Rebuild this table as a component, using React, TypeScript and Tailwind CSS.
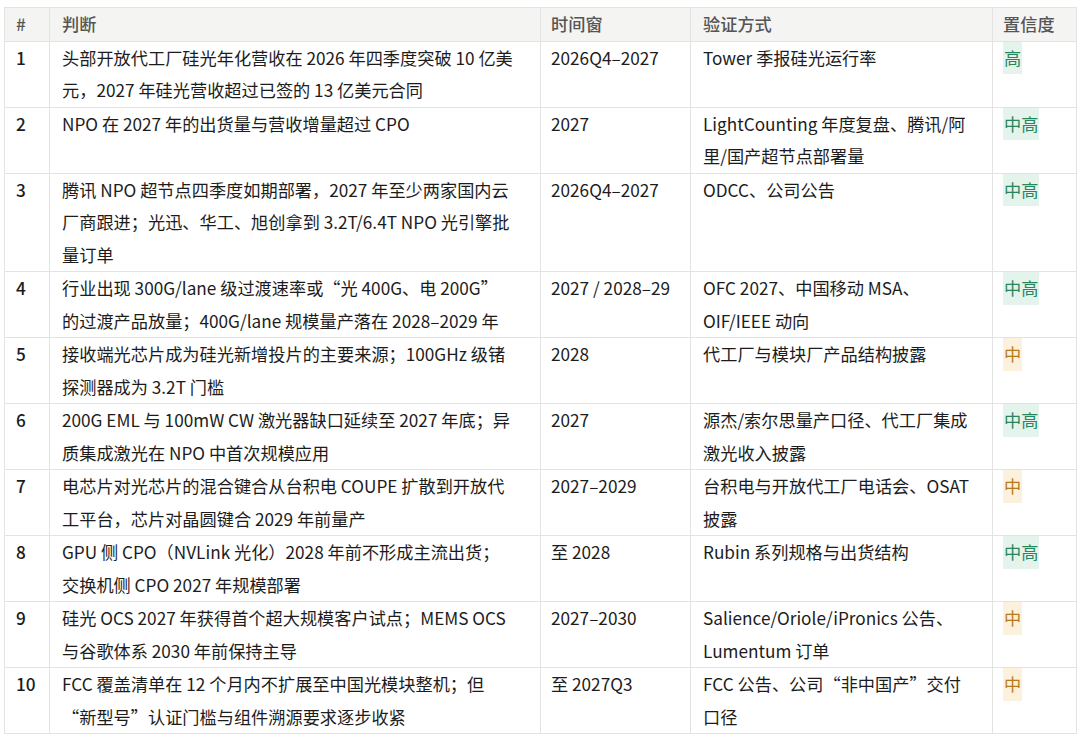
const rows = [
  {
    id: "1",
    claim: ["头部开放代工厂硅光年化营收在 2026 年四季度突破 10 亿美", "元，2027 年硅光营收超过已签的 13 亿美元合同"],
    time: "2026Q4–2027",
    check: ["Tower 季报硅光运行率"],
    level: "高",
  },
  {
    id: "2",
    claim: ["NPO 在 2027 年的出货量与营收增量超过 CPO"],
    time: "2027",
    check: ["LightCounting 年度复盘、腾讯/阿", "里/国产超节点部署量"],
    level: "中高",
  },
  {
    id: "3",
    claim: [
      "腾讯 NPO 超节点四季度如期部署，2027 年至少两家国内云",
      "厂商跟进；光迅、华工、旭创拿到 3.2T/6.4T NPO 光引擎批",
      "量订单",
    ],
    time: "2026Q4–2027",
    check: ["ODCC、公司公告"],
    level: "中高",
  },
  {
    id: "4",
    claim: ["行业出现 300G/lane 级过渡速率或“光 400G、电 200G”", "的过渡产品放量；400G/lane 规模量产落在 2028–2029 年"],
    time: "2027 / 2028–29",
    check: ["OFC 2027、中国移动 MSA、", "OIF/IEEE 动向"],
    level: "中高",
  },
  {
    id: "5",
    claim: ["接收端光芯片成为硅光新增投片的主要来源；100GHz 级锗", "探测器成为 3.2T 门槛"],
    time: "2028",
    check: ["代工厂与模块厂产品结构披露"],
    level: "中",
  },
  {
    id: "6",
    claim: ["200G EML 与 100mW CW 激光器缺口延续至 2027 年底；异", "质集成激光在 NPO 中首次规模应用"],
    time: "2027",
    check: ["源杰/索尔思量产口径、代工厂集成", "激光收入披露"],
    level: "中高",
  },
  {
    id: "7",
    claim: ["电芯片对光芯片的混合键合从台积电 COUPE 扩散到开放代", "工平台，芯片对晶圆键合 2029 年前量产"],
    time: "2027–2029",
    check: ["台积电与开放代工厂电话会、OSAT", "披露"],
    level: "中",
  },
  {
    id: "8",
    claim: ["GPU 侧 CPO（NVLink 光化）2028 年前不形成主流出货；", "交换机侧 CPO 2027 年规模部署"],
    time: "至 2028",
    check: ["Rubin 系列规格与出货结构"],
    level: "中高",
  },
  {
    id: "9",
    claim: ["硅光 OCS 2027 年获得首个超大规模客户试点；MEMS OCS", "与谷歌体系 2030 年前保持主导"],
    time: "2027–2030",
    check: ["Salience/Oriole/iPronics 公告、", "Lumentum 订单"],
    level: "中",
  },
  {
    id: "10",
    claim: ["FCC 覆盖清单在 12 个月内不扩展至中国光模块整机；但", "“新型号”认证门槛与组件溯源要求逐步收紧"],
    time: "至 2027Q3",
    check: ["FCC 公告、公司“非中国产”交付", "口径"],
    level: "中",
  },
]

const Level = ({ level }: { level: string }) => {
  if (level === "中") {
    return <span className="inline-block px-[1px] bg-[#fcf1dc] text-[#b77b1c]">{level}</span>
  }
  return <span className="inline-block px-[1px] bg-[#e4f3ec] text-[#25875b]">{level}</span>
}

const Lines = ({ lines }: { lines: string[] }) => (
  <>
    {lines.map((l, i) => (
      <div key={i} className="whitespace-nowrap">
        {l}
      </div>
    ))}
  </>
)

const App = () => {
  return (
    <div
      className="min-h-[739px] bg-white pt-[7px] pl-[4px]"
      style={{ fontFamily: '"Noto Sans CJK SC", "Noto Sans", sans-serif' }}
    >
      <table className="w-[1072px] table-fixed border-collapse text-[17.2px] leading-[32.5px] text-[#1c1c1c]">
        <colgroup>
          <col className="w-[45px]" />
          <col className="w-[491px]" />
          <col className="w-[150px]" />
          <col className="w-[302px]" />
          <col className="w-[84px]" />
        </colgroup>
        <thead>
          <tr className="bg-[#f4f4f3] text-[#555]">
            <th className="border border-[#e3e3e3] px-[11px] text-left font-medium">#</th>
            <th className="border border-[#e3e3e3] px-[12px] text-left font-medium">判断</th>
            <th className="border border-[#e3e3e3] px-[10px] text-left font-medium">时间窗</th>
            <th className="border border-[#e3e3e3] px-[12px] text-left font-medium">验证方式</th>
            <th className="border border-[#e3e3e3] px-[10px] text-left font-medium">置信度</th>
          </tr>
        </thead>
        <tbody>
          {rows.map((r) => (
            <tr key={r.id}>
              <td className="border border-[#e3e3e3] px-[11px] align-top font-medium">{r.id}</td>
              <td className="border border-[#e3e3e3] px-[12px] align-top">
                <Lines lines={r.claim} />
              </td>
              <td className="border border-[#e3e3e3] px-[10px] align-top">{r.time}</td>
              <td className="border border-[#e3e3e3] px-[12px] align-top">
                <Lines lines={r.check} />
              </td>
              <td className="border border-[#e3e3e3] px-[10px] align-top">
                <Level level={r.level} />
              </td>
            </tr>
          ))}
        </tbody>
      </table>
    </div>
  )
}

export default App
